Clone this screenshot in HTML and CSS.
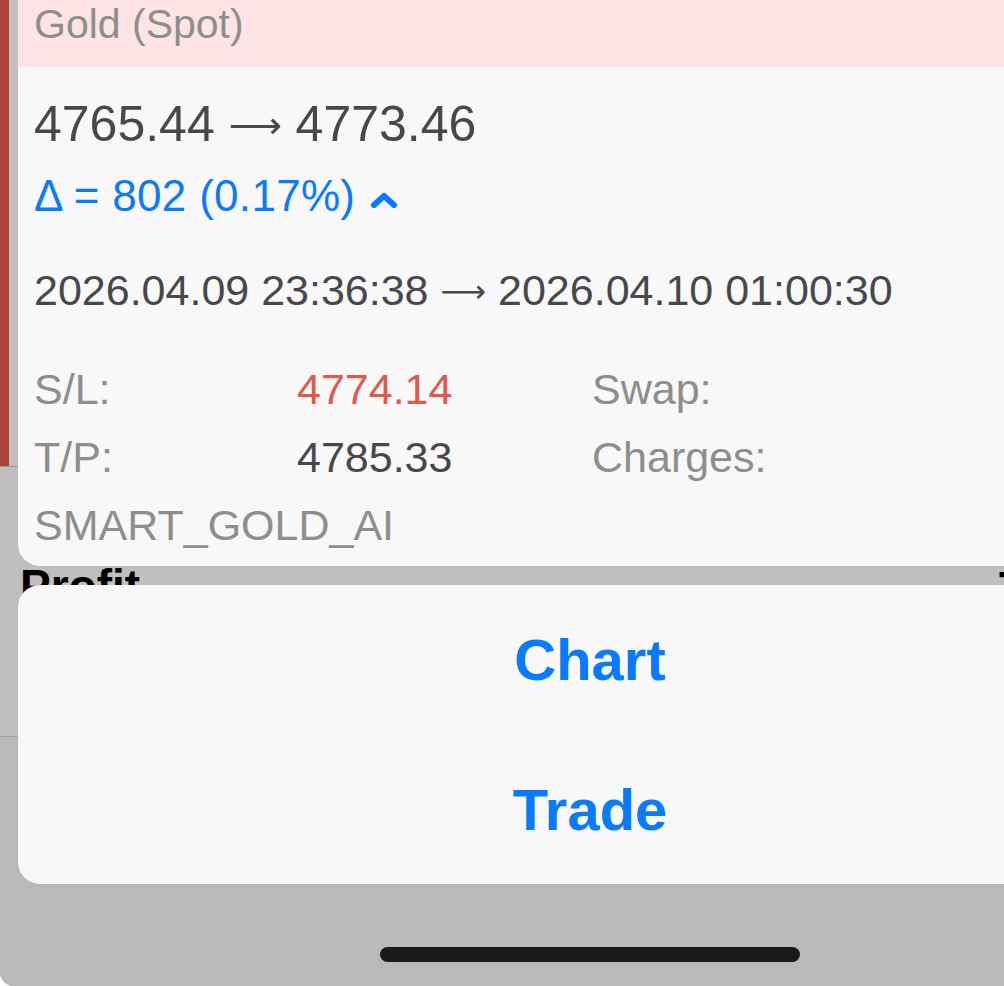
FILE: index.html
```html
<html>
	<head>
		<title>Position details</title>
		<link rel="stylesheet" href="styles.css">
	</head>
	<body>
		<div id="screen">
			<!-- the app screen dimmed behind the sheet -->
			<div id="backdrop">
				<div class="strip"></div>
				<div class="divider"></div>
				<p class="behind-title">Profit</p>
				<p class="behind-edge">T</p>
			</div>

			<div id="sheet">
				<div class="card">
					<div class="card-head">Gold (Spot)</div>
					<div class="card-body">
						<p class="price">4765.44 <span class="arrow">&#10230;</span> 4773.46</p>
						<p class="delta">&Delta; = 802 (0.17%)
							<svg class="chevron" width="28" height="18" viewBox="0 0 28 18">
								<path d="M4 14 L14 5 L24 14" fill="none" stroke="#0a7aff" stroke-width="6" stroke-linecap="round" stroke-linejoin="round"/>
							</svg>
						</p>
						<p class="dates">2026.04.09 23:36:38 <span class="arrow">&#10230;</span> 2026.04.10 01:00:30</p>
						<div class="details">
							<span class="label">S/L:</span>
							<span class="value loss">4774.14</span>
							<span class="label">Swap:</span>
							<span class="label">T/P:</span>
							<span class="value">4785.33</span>
							<span class="label">Charges:</span>
							<span class="label comment">SMART_GOLD_AI</span>
						</div>
					</div>
				</div>

				<div class="actions">
					<button class="action">Chart</button>
					<button class="action">Trade</button>
				</div>

				<div class="home-bar"></div>
			</div>
		</div>
	</body>
</html>
```

FILE: styles.css
```css
body
{
	margin: 0;
	background-color: #ffffff;
	font-family: "Liberation Sans", Arial, sans-serif;
}

p
{
	margin: 0;
}

#screen
{
	position: relative;
	width: 1004px;
	height: 986px;
	overflow: hidden;
	background-color: #bdbdbd;
	border-bottom-left-radius: 14px;
}

#backdrop
{
	position: absolute;
	left: 0;
	top: 0;
	width: 1004px;
	height: 986px;
	background: linear-gradient(#bfbfbf 0, #bfbfbf 736px, #b9b9b9 736px);
}

.strip
{
	position: absolute;
	left: 0;
	top: 0;
	width: 9px;
	height: 466px;
	background-color: #a8443c;
	border-bottom: 1px solid #9a9a9a;
	padding-right: 9px;
	background-clip: content-box;
	box-shadow: inset -9px 0 0 #c0c0c0;
}

.divider
{
	position: absolute;
	left: 0;
	top: 736px;
	width: 1004px;
	height: 1px;
	background-color: #a4a4a4;
}

.behind-title
{
	position: absolute;
	left: 20px;
	top: 559px;
	font-size: 46px;
	font-weight: bold;
	color: #000000;
}

.behind-edge
{
	position: absolute;
	left: 999px;
	top: 561px;
	font-size: 46px;
	font-weight: bold;
	color: #000000;
}

#sheet
{
	position: relative;
	margin-left: 18px;
	width: 1144px;
}

.card
{
	height: 566px;
	background-color: #f8f8f8;
	border-bottom-left-radius: 22px;
	border-bottom-right-radius: 22px;
	overflow: hidden;
}

.card-head
{
	height: 67px;
	padding-left: 16px;
	padding-top: 1px;
	box-sizing: border-box;
	background-color: #fee4e4;
	font-size: 41px;
	line-height: 46px;
	color: #8e8e8e;
}

.card-body
{
	padding: 28px 16px 0 16px;
}

.arrow
{
	font-family: "DejaVu Sans", sans-serif;
	font-size: 0.74em;
	line-height: 0;
	vertical-align: 0.08em;
}

.price
{
	font-size: 50px;
	line-height: 58px;
	color: #48484c;
}

.delta
{
	margin-top: 19px;
	font-size: 44px;
	line-height: 48px;
	color: #0a7aff;
	letter-spacing: 0.3px;
}

.chevron
{
	margin-left: 2px;
	vertical-align: 2px;
}

.dates
{
	margin-top: 45px;
	font-size: 43px;
	line-height: 50px;
	color: #48484c;
}

.details
{
	margin-top: 40px;
	display: grid;
	grid-template-columns: 263px 295px auto;
	font-size: 43px;
	line-height: 68px;
}

.label
{
	color: #8e8e8e;
}

.value
{
	color: #48484c;
}

.loss
{
	color: #e0594b;
}

.comment
{
	grid-column: 1 / 4;
}

.actions
{
	margin-top: 19px;
	height: 299px;
	background-color: #f8f8f8;
	border-radius: 22px;
	display: flex;
	flex-direction: column;
}

.action
{
	flex: 1;
	border: 0;
	background: none;
	font-family: "Liberation Sans", Arial, sans-serif;
	font-size: 58px;
	font-weight: bold;
	color: #0a7aff;
}

.home-bar
{
	width: 420px;
	height: 15px;
	margin: 63px auto 0 auto;
	border-radius: 8px;
	background-color: #1a1a1a;
}
```
